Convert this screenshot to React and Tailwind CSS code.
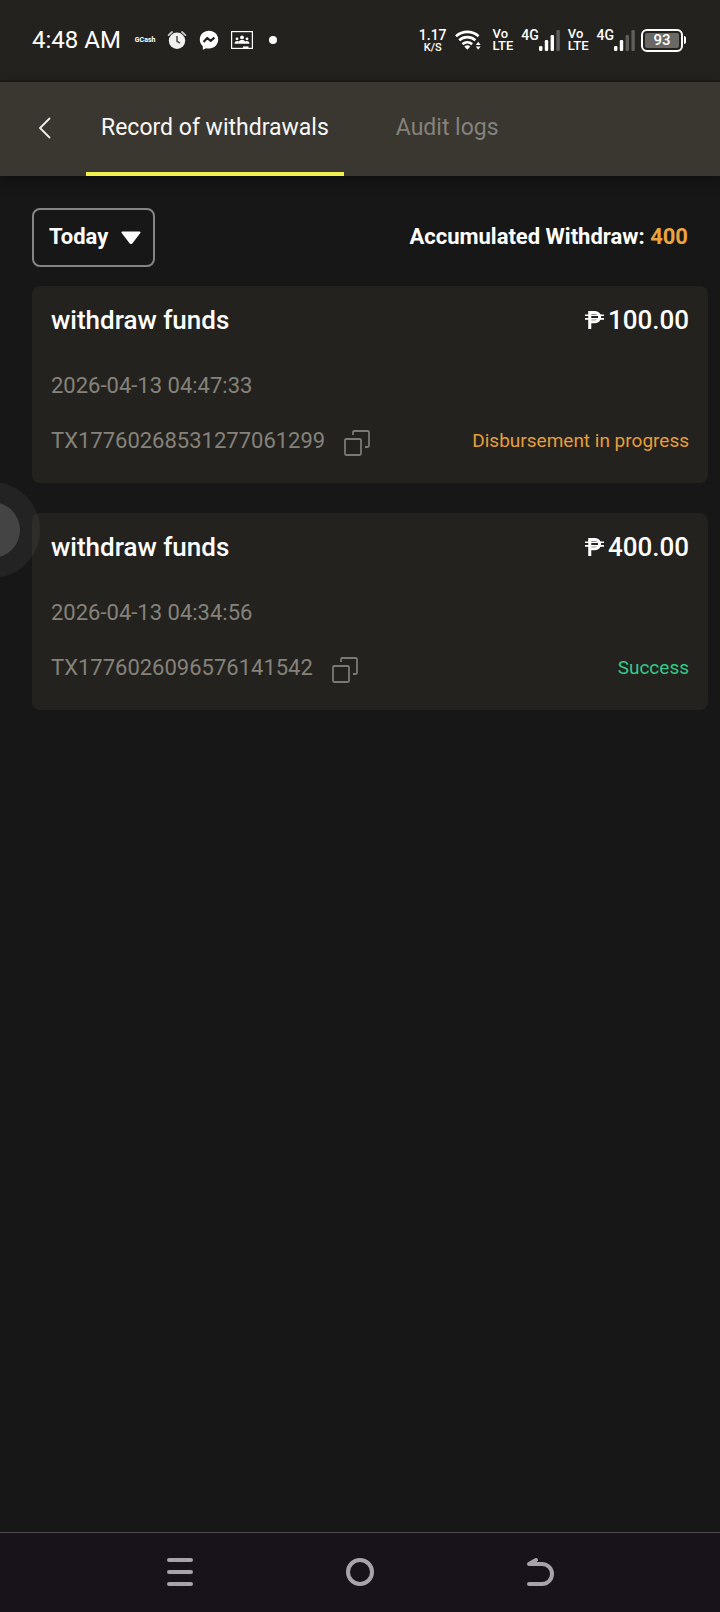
import { useState } from 'react';

const records = [
  {
    id: 'TX17760268531277061299',
    title: 'withdraw funds',
    amount: '100.00',
    date: '2026-04-13 04:47:33',
    status: 'Disbursement in progress',
    statusColor: 'text-[#e59e3b]',
  },
  {
    id: 'TX1776026096576141542',
    title: 'withdraw funds',
    amount: '400.00',
    date: '2026-04-13 04:34:56',
    status: 'Success',
    statusColor: 'text-[#35c98a]',
  },
];

function AlarmIcon() {
  return (
    <svg width="20" height="20" viewBox="0 0 20 20" fill="none">
      <circle cx="10" cy="10.8" r="8.2" fill="#f0f0ee" />
      <path d="M1.6 5.2 5 2M18.4 5.2 15 2" stroke="#c9c8c5" strokeWidth="1.8" strokeLinecap="round" />
      <path d="M10 6v5.2l3 2" stroke="#55534e" strokeWidth="1.6" />
    </svg>
  );
}

function MessengerIcon() {
  return (
    <svg width="20" height="20" viewBox="0 0 20 20" fill="none">
      <path
        d="M10 .8C4.7.8.8 4.6.8 9.6c0 2.7 1.1 5 3 6.6v2.7c0 .5.4.7.8.5l2.4-1.2c1 .3 1.9.4 3 .4 5.3 0 9.2-3.9 9.2-9S15.3.8 10 .8Z"
        fill="#fff"
      />
      <path d="m4.6 12 3.6-4 3.5 2.8 3.7-3.2" stroke="#24221e" strokeWidth="2.2" strokeLinejoin="round" />
    </svg>
  );
}

function ClassroomIcon() {
  return (
    <svg width="22" height="20" viewBox="0 0 22 20" fill="none">
      <rect x=".6" y="1.6" width="20.8" height="16.8" stroke="#fff" strokeWidth="1.2" />
      <circle cx="11" cy="7.4" r="1.9" fill="#fff" />
      <circle cx="6" cy="8.8" r="1.4" fill="#fff" />
      <circle cx="16" cy="8.8" r="1.4" fill="#fff" />
      <path d="M3.5 13.8c0-2 1.2-2.9 2.7-2.9.7 0 1.2.2 1.6.5.8-.9 1.9-1.3 3.2-1.3s2.4.4 3.2 1.3c.4-.3.9-.5 1.6-.5 1.5 0 2.7.9 2.7 2.9Z" fill="#fff" />
      <rect x="12" y="16.4" width="5.5" height="1.6" fill="#fff" />
    </svg>
  );
}

function WifiIcon() {
  return (
    <svg width="26" height="20" viewBox="0 0 26 20" fill="none">
      <g stroke="#fff" strokeWidth="2.6">
        <path d="M1 6.2a17 17 0 0 1 22.6 0" />
        <path d="M4.2 10.3a12 12 0 0 1 16.2 0" />
        <path d="M7.5 14.2a7 7 0 0 1 9.6 0" />
      </g>
      <path d="M9.3 16.6a4.6 4.6 0 0 1 6 0l-3 3.2Z" fill="#fff" />
      <path d="m23.2 11.8 2.4 3.2h-4.8ZM23.2 19.8l2.4-3.2h-4.8Z" fill="#fff" />
    </svg>
  );
}

function Signal({ bars }) {
  return (
    <div className="flex h-[22px]">
      <span className="text-[14px] leading-3 font-medium">4G</span>
      <svg width="21" height="22" viewBox="0 0 21 22">
        {[5, 11, 16, 21].map((h, i) => (
          <rect key={h} x={i * 5.8} y={22 - h} width="3.4" height={h} rx="1.2" fill={i < bars ? '#fff' : '#5f5d59'} />
        ))}
      </svg>
    </div>
  );
}

function VoLte() {
  return (
    <div className="text-[13px] leading-3 font-medium">
      <div>Vo</div>
      <div>LTE</div>
    </div>
  );
}

function Battery() {
  return (
    <div className="flex items-center gap-px">
      <div className="flex h-[23px] w-[42px] rounded-md border-2 border-white p-0.5">
        <div className="flex flex-1 items-center justify-center rounded-xs bg-[#6b6965] text-[15px] leading-none font-medium">93</div>
      </div>
      <div className="h-2 w-0.5 rounded-r bg-white" />
    </div>
  );
}

function StatusBar() {
  return (
    <div className="flex h-[82px] items-center justify-between border-b-2 border-[#1c1a15] bg-[#24221e] pr-[34px] pl-8 text-white">
      <div className="flex items-center">
        <span className="text-[24px] leading-6">4:48 AM</span>
        <span className="ml-[14px] text-[7px] font-bold">GCash</span>
        <div className="ml-3 flex items-center gap-3">
          <AlarmIcon />
          <MessengerIcon />
          <ClassroomIcon />
        </div>
        <span className="ml-4 size-2 rounded-full bg-white" />
      </div>
      <div className="flex items-center">
        <div className="text-center font-medium">
          <div className="text-[14px] leading-[14px]">1.17</div>
          <div className="text-[11px] leading-[11px]">K/S</div>
        </div>
        <div className="mr-3 ml-2">
          <WifiIcon />
        </div>
        <div className="mr-1.5 flex items-center gap-2">
          <VoLte />
          <Signal bars={3} />
          <VoLte />
          <Signal bars={2} />
        </div>
        <Battery />
      </div>
    </div>
  );
}

function Header({ tab, setTab }) {
  return (
    <header className="flex h-[94px] items-stretch bg-[#3a3630] shadow-[0_4px_12px_#0006]">
      <button className="w-[86px] pb-0.5 pl-[35px]" aria-label="Back">
        <svg width="20" height="24" viewBox="0 0 20 24" fill="none">
          <path d="M15 2 5 12l10 10" stroke="#f1f0ee" strokeWidth="1.8" />
        </svg>
      </button>
      {['Record of withdrawals', 'Audit logs'].map((name) => (
        <button
          key={name}
          onClick={() => setTab(name)}
          className={`border-b-4 px-[15px] pt-0.5 text-[23px] not-last:mr-[37px] ${
            tab === name ? 'border-[#f0f04f] text-[#f8f7f5]' : 'border-transparent text-[#85827b]'
          }`}
        >
          {name}
        </button>
      ))}
    </header>
  );
}

function CopyIcon() {
  return (
    <svg width="26" height="26" viewBox="0 0 26 26" fill="none" stroke="#7b7973" strokeWidth="1.8">
      <rect x="1" y="9" width="16" height="16" rx="1.2" />
      <path d="M9 5V2.2C9 1.5 9.5 1 10.2 1h13.6c.7 0 1.2.5 1.2 1.2v13.6c0 .7-.5 1.2-1.2 1.2H21" />
    </svg>
  );
}

function RecordCard({ record }) {
  return (
    <article className="rounded-lg bg-[#24221e] px-[19px] pt-[18px] pb-[26px]">
      <div className="flex items-center justify-between text-[26px] leading-8 font-medium text-white">
        <h2>{record.title}</h2>
        <span className="flex items-center gap-1">
          <svg width="19" height="20" viewBox="0 0 20 20" fill="none" stroke="#fff">
            <path d="M5 19.5V2h5.5a4.8 4.8 0 0 1 0 9.8H5" strokeWidth="3.2" />
            <path d="M0 5h20M0 8.8h20" strokeWidth="1.8" />
          </svg>
          {record.amount}
        </span>
      </div>
      <p className="mt-[34px] text-[22px] leading-8 text-[#85827b]">{record.date}</p>
      <div className="mt-[23px] flex items-center justify-between leading-8">
        <div className="flex items-center gap-[19px] text-[22px] text-[#85827b]">
          {record.id}
          <button aria-label="Copy transaction id" className="pt-1">
            <CopyIcon />
          </button>
        </div>
        <span className={`text-[19px] ${record.statusColor}`}>{record.status}</span>
      </div>
    </article>
  );
}

function NavBar() {
  return (
    <nav className="flex h-20 items-center justify-center gap-[148px] border-t border-[#4c4a4d] bg-[#18131a] pb-0.5">
      <button aria-label="Recent apps">
        <svg width="32" height="32" viewBox="0 0 32 32" stroke="#a8a2aa" strokeWidth="4" strokeLinecap="round">
          <path d="M5 4h22M5 16h22M5 28h22" />
        </svg>
      </button>
      <button aria-label="Home">
        <svg width="32" height="32" viewBox="0 0 32 32" fill="none" stroke="#a8a2aa" strokeWidth="4">
          <circle cx="16" cy="16" r="12" />
        </svg>
      </button>
      <button aria-label="Back">
        <svg width="32" height="32" viewBox="0 0 32 32" fill="none" stroke="#a8a2aa" strokeWidth="4" strokeLinecap="round" strokeLinejoin="round">
          <path d="M12 4 5 8h13a10 10 0 0 1 0 20H5" />
        </svg>
      </button>
    </nav>
  );
}

export default function App() {
  const [tab, setTab] = useState('Record of withdrawals');

  return (
    <div className="relative flex min-h-screen flex-col overflow-x-hidden bg-[#171717] font-[Roboto,sans-serif]">
      <StatusBar />
      <Header tab={tab} setTab={setTab} />

      <main className="flex-1 pt-8 pr-3 pl-8">
        {/* Filter row */}
        <div className="flex items-center justify-between pr-5">
          <div className="relative">
            <select
              aria-label="Period"
              className="h-[59px] w-[123px] appearance-none rounded-lg border-2 border-[#858583] bg-transparent pb-0.5 pl-[15px] text-[22px] font-bold text-white"
            >
              <option>Today</option>
              <option>Week</option>
              <option>Month</option>
            </select>
            <svg className="pointer-events-none absolute top-[23px] right-3.5" width="20" height="14" viewBox="0 0 20 14">
              <path d="M1.5.5h17c1 0 1.4.9.8 1.6l-8 10.3c-.7.9-1.9.9-2.6 0L.7 2.1C.1 1.4.5.5 1.5.5Z" fill="#fff" />
            </svg>
          </div>
          <p className="pb-0.5 text-[22px] font-bold text-white">
            Accumulated Withdraw: <span className="text-[#eba53f]">400</span>
          </p>
        </div>

        <div className="mt-[19px] flex flex-col gap-[30px]">
          {records.map((record) => (
            <RecordCard key={record.id} record={record} />
          ))}
        </div>
      </main>

      <NavBar />

      {/* Floating assistive button */}
      <button
        aria-label="Assistive touch"
        className="absolute top-[482px] -left-14 flex size-24 items-center justify-center rounded-full bg-white/5"
      >
        <span className="size-14 rounded-full bg-[#444444]" />
      </button>
    </div>
  );
}
